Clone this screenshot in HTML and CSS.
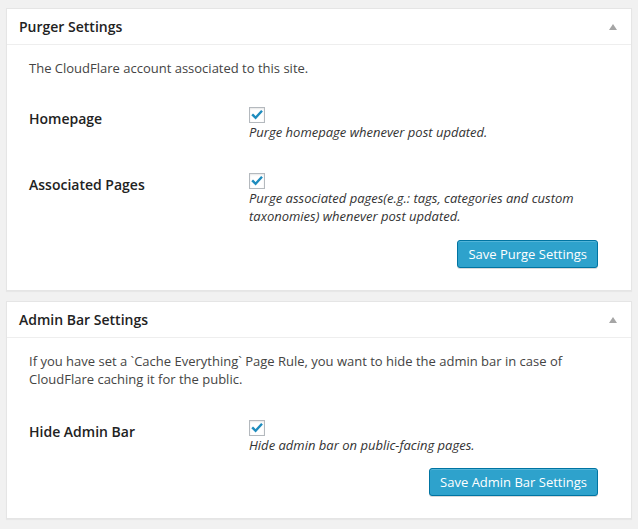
FILE: index.html
```html
<!DOCTYPE html>
<html lang="en">
<head>
<meta charset="utf-8">
<title>CloudFlare Settings</title>
<link rel="stylesheet" href="styles.css">
</head>
<body>
<div class="postbox">
  <div class="hndle">
    <h3 class="title">Purger Settings</h3>
    <span class="toggle" aria-hidden="true"></span>
  </div>
  <div class="inside">
    <p class="intro">The CloudFlare account associated to this site.</p>
    <div class="form">
      <div class="row">
        <div class="label">Homepage</div>
        <div class="field">
          <span class="check"><svg viewBox="0 0 16 16" width="16" height="16"><path d="M4 8.2 L6.6 10.8 L12.2 4.6" fill="none" stroke="#1e8cbe" stroke-width="2.4" stroke-linecap="square"/></svg></span>
          <div class="desc">Purge homepage whenever post updated.</div>
        </div>
      </div>
      <div class="row">
        <div class="label">Associated Pages</div>
        <div class="field">
          <span class="check"><svg viewBox="0 0 16 16" width="16" height="16"><path d="M4 8.2 L6.6 10.8 L12.2 4.6" fill="none" stroke="#1e8cbe" stroke-width="2.4" stroke-linecap="square"/></svg></span>
          <div class="desc">Purge associated pages(e.g.: tags, categories and custom taxonomies) whenever post updated.</div>
        </div>
      </div>
      <div class="actions"><button class="button">Save Purge Settings</button></div>
    </div>
  </div>
</div>

<div class="postbox">
  <div class="hndle">
    <h3 class="title">Admin Bar Settings</h3>
    <span class="toggle" aria-hidden="true"></span>
  </div>
  <div class="inside">
    <p class="intro">If you have set a `Cache Everything` Page Rule, you want to hide the admin bar in case of CloudFlare caching it for the public.</p>
    <div class="form form-after-long">
      <div class="row">
        <div class="label">Hide Admin Bar</div>
        <div class="field">
          <span class="check"><svg viewBox="0 0 16 16" width="16" height="16"><path d="M4 8.2 L6.6 10.8 L12.2 4.6" fill="none" stroke="#1e8cbe" stroke-width="2.4" stroke-linecap="square"/></svg></span>
          <div class="desc">Hide admin bar on public-facing pages.</div>
        </div>
      </div>
      <div class="actions"><button class="button">Save Admin Bar Settings</button></div>
    </div>
  </div>
</div>
</body>
</html>
```

FILE: styles.css
```css
html, body {
  margin: 0;
  background: #f1f1f1;
}
body {
  padding: 8px 6px 0;
  font-family: "Open Sans", "Liberation Sans", sans-serif;
  font-size: 13px;
  color: #444;
}
.postbox {
  background: #fff;
  border: 1px solid #e5e5e5;
  box-shadow: 0 1px 1px rgba(0,0,0,0.04);
  margin-bottom: 10px;
}
.hndle {
  display: flex;
  align-items: center;
  justify-content: space-between;
  border-bottom: 1px solid #eee;
  padding: 8px 14px 8px 12px;
}
.title {
  margin: 0;
  font-size: 14px;
  font-weight: 600;
  line-height: 19px;
  color: #222;
}
.toggle {
  width: 0;
  height: 0;
  border-left: 4px solid transparent;
  border-right: 4px solid transparent;
  border-bottom: 6px solid #a5a5a5;
  margin-top: 1px;
}
.inside {
  padding: 0 33px 22px 22px;
}
.intro {
  margin: 14px 0 0;
  line-height: 18px;
}
.form {
  margin-top: 14px;
}
.form-after-long {
  margin-top: 16px;
}
.row {
  display: grid;
  grid-template-columns: 220px 1fr;
  padding: 16px 0;
}
.label {
  font-size: 14px;
  font-weight: 600;
  line-height: 24px;
  color: #222;
}
.check {
  display: block;
  width: 16px;
  height: 16px;
  box-sizing: border-box;
  border: 1px solid #b4b9be;
  background: #fff;
  box-shadow: inset 0 1px 2px rgba(0,0,0,0.1);
  position: relative;
}
.check svg {
  position: absolute;
  left: -1px;
  top: -1px;
}
.desc {
  font-style: italic;
  line-height: 18px;
  color: #333;
}
.actions {
  display: flex;
  justify-content: flex-end;
  margin-top: -1px;
}
.form-after-long .actions {
  margin-top: -2px;
}
.button {
  font-family: "Open Sans", "Liberation Sans", sans-serif;
  font-size: 13px;
  height: 28px;
  line-height: 26px;
  padding: 0 10px 1px;
  color: #fff;
  background: #2ea2cc;
  border: 1px solid #0074a2;
  border-radius: 3px;
  box-shadow: inset 0 1px 0 rgba(120,200,230,0.5), 0 1px 0 rgba(0,0,0,0.15);
  cursor: pointer;
}
```
